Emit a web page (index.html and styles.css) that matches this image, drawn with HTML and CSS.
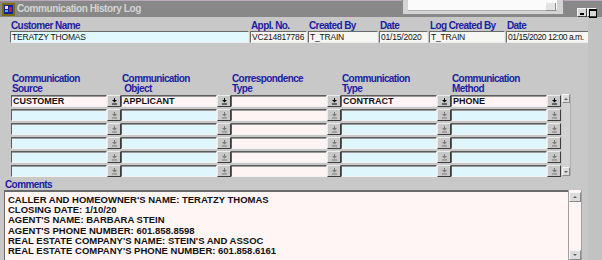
FILE: index.html
```html
<!DOCTYPE html>
<html lang="en">

<head>
  <meta charset="UTF-8">
  <meta name="viewport" content="width=device-width, initial-scale=1.0">
  <title>Communication History Log</title>
  <link rel="stylesheet" href="styles.css">
</head>

<body>
  <div class="window">
    <div class="titlebar">
      <svg class="app-icon" width="13" height="13" viewBox="0 0 13 13">
        <rect x="0" y="0" width="13" height="13" fill="#7a6a10" />
        <rect x="2" y="2" width="9" height="9" fill="#1020a0" />
        <rect x="3" y="3" width="3" height="3" fill="#e8e8e8" />
        <rect x="7" y="4" width="3" height="5" fill="#c02020" />
        <rect x="3" y="7" width="3" height="2" fill="#40c0e0" />
      </svg>
      <span class="title">Communication History Log</span>
      <div class="popup">
        <div class="popup-field"></div>
        <span class="popup-btn"></span>
      </div>
      <div class="win-buttons">
        <span class="win-btn min"></span>
        <span class="win-btn max"></span>
      </div>
    </div>

    <div class="main">
      <div class="content">
        <div class="head-grid">
          <span class="lbl">Customer Name</span>
          <span class="lbl">Appl. No.</span>
          <span class="lbl">Created By</span>
          <span class="lbl">Date</span>
          <span class="lbl">Log Created By</span>
          <span class="lbl">Date</span>
          <div class="field cyan">TERATZY THOMAS</div>
          <div class="field">VC214817786</div>
          <div class="field">T_TRAIN</div>
          <div class="field">01/15/2020</div>
          <div class="field">T_TRAIN</div>
          <div class="field tight">01/15/2020 12:00 a.m.</div>
        </div>

        <div class="lookup">
          <div class="lookup-table">
            <div class="lookup-head">
              <span class="lbl">Communication<br>Source</span>
              <span class="lbl">Communication<br>&nbsp;Object</span>
              <span class="lbl">Correspondence<br>Type</span>
              <span class="lbl">Communication<br>Type</span>
              <span class="lbl">Communication<br>Method</span>
            </div>
            <div class="lookup-rows" id="rows"></div>
          </div>
          <div class="vscroll">
            <span class="sb-btn up"></span>
            <span class="sb-track"></span>
            <span class="sb-btn down"></span>
          </div>
        </div>

        <span class="lbl comments-label">Comments</span>
        <div class="comments">
          <div class="comments-text">
            CALLER AND HOMEOWNER'S NAME: TERATZY THOMAS<br>
            CLOSING DATE: 1/10/20<br>
            AGENT'S NAME: BARBARA STEIN<br>
            AGENT'S PHONE NUMBER: 601.858.8598<br>
            REAL ESTATE COMPANY'S NAME: STEIN'S AND ASSOC<br>
            REAL ESTATE COMPANY'S PHONE NUMBER: 601.858.6161
          </div>
          <div class="cscroll">
            <span class="sb-btn up"></span>
            <span class="sb-track"></span>
            <span class="sb-btn down"></span>
          </div>
        </div>
      </div>
      <div class="edge"></div>
    </div>
  </div>

  <script>
    document.addEventListener('DOMContentLoaded', () => {
      const rows = document.getElementById('rows');
      const first = ['CUSTOMER', 'APPLICANT', '', 'CONTRACT', 'PHONE'];
      const arrow = '<svg width="7" height="7" viewBox="0 0 7 7"><rect x="3" y="0" width="1" height="2"/><path d="M1 2h5L3.5 4.5z"/><rect x="1" y="5.5" width="5" height="1"/></svg>';

      for (let r = 0; r < 6; r++) {
        const row = document.createElement('div');
        row.className = 'lookup-row';
        for (let c = 0; c < 5; c++) {
          const cell = document.createElement('div');
          cell.className = 'cell';
          const pink = r === 0 || c === 2;
          const text = r === 0 ? first[c] : '';
          cell.innerHTML = `<div class="cell-field ${pink ? 'pink' : 'cyan'}">${text}</div>` +
            `<span class="drop-btn ${r === 0 ? 'active' : ''}">${arrow}</span>`;
          row.appendChild(cell);
        }
        rows.appendChild(row);
      }
    });
  </script>
</body>

</html>
```

FILE: styles.css
```css
* {
  margin: 0;
  padding: 0;
  box-sizing: border-box;
}

body {
  background: #c8c8c8;
  font-family: 'Liberation Sans', Arial, sans-serif;
}

.window {
  width: 602px;
  height: 260px;
  overflow: hidden;
  display: flex;
  flex-direction: column;
  background: #c8c8c8;
}

/* title bar */

.titlebar {
  position: relative;
  height: 17px;
  flex-shrink: 0;
  display: flex;
  align-items: flex-start;
  padding-left: 2px;
  background: #888888;
  border-top: 1px solid #bcaabc;
}

.app-icon {
  margin-top: 2px;
}

.title {
  margin-left: 2px;
  line-height: 16px;
  font-size: 10px;
  font-weight: bold;
  letter-spacing: -0.4px;
  color: #d4d4d4;
}

.popup {
  position: absolute;
  left: 402px;
  top: -1px;
  width: 162px;
  height: 15px;
  background: #d4d4d4;
  border-left: 1px solid #8a8a8a;
  border-right: 1px solid #8a8a8a;
  border-bottom: 1px solid #8a8a8a;
  padding: 0 6px 3px 5px;
  display: flex;
}

.popup-field {
  flex: 1;
  background: #fbfbfb;
  border-bottom: 1px solid #b0b0b0;
}

.popup-btn {
  position: absolute;
  right: 7px;
  top: 3px;
  width: 10px;
  height: 8px;
  background: #e4e4e4;
  border-right: 1px solid #909090;
  border-bottom: 1px solid #909090;
}

.win-buttons {
  margin-left: auto;
  margin-right: 5px;
  margin-top: 7px;
  display: flex;
}

.win-btn {
  position: relative;
  width: 10px;
  height: 9px;
  background: #d8d8d8;
  border: 1px solid;
  border-color: #f4f4f4 #404040 #404040 #f4f4f4;
}

.win-btn.min::after {
  content: '';
  position: absolute;
  left: 2px;
  bottom: 1px;
  width: 4px;
  height: 2px;
  background: #000;
}

.win-btn.max::after {
  content: '';
  position: absolute;
  left: 1px;
  top: 0;
  width: 6px;
  height: 6px;
  border: 1px solid #000;
  border-top-width: 2px;
}

/* body */

.main {
  flex: 1;
  display: flex;
  min-height: 0;
}

.content {
  width: 588px;
  display: flex;
  flex-direction: column;
  padding-top: 4px;
}

.edge {
  flex: 1;
  background: #c2c2c2;
}

.lbl {
  display: block;
  font-size: 10px;
  line-height: 10px;
  font-weight: bold;
  letter-spacing: -0.6px;
  color: #1c1ca4;
  white-space: nowrap;
}

.head-grid {
  margin-left: 10px;
  display: grid;
  grid-template-columns: 239px 57px 70px 49px 76px 91px;
  column-gap: 1px;
}

.head-grid .lbl {
  padding-left: 1px;
}

.field {
  height: 12px;
  padding-left: 1px;
  font-size: 8.5px;
  line-height: 10px;
  letter-spacing: -0.2px;
  color: #111;
  white-space: nowrap;
  overflow: hidden;
  background: #f6f6f3;
  border: 1px solid;
  border-color: #6a6a6a #eeeeee #eeeeee #6a6a6a;
}

.field.cyan {
  background: #e2f8ff;
}

.field.tight {
  letter-spacing: -0.45px;
}

/* lookup grid */

.lookup {
  margin-top: 31px;
  margin-left: 11px;
  display: flex;
  align-items: flex-start;
}

.lookup-head {
  display: grid;
  grid-template-columns: repeat(5, 110px);
  margin-bottom: 1px;
}

.lookup-head .lbl {
  padding-left: 1px;
}

.lookup-rows {
  display: flex;
  flex-direction: column;
  gap: 2px;
}

.lookup-row {
  display: grid;
  grid-template-columns: repeat(5, 110px);
}

.cell {
  display: flex;
  height: 12px;
}

.cell-field {
  width: 96px;
  padding-left: 1px;
  font-size: 9px;
  line-height: 10px;
  font-weight: bold;
  color: #111;
  border: 1px solid;
  border-color: #5c5c5c #f2f2f2 #f2f2f2 #5c5c5c;
  box-shadow: inset 0 1px 0 #9a9a9a;
}

.cell-field.pink {
  background: #fff4f4;
}

.cell-field.cyan {
  background: #dff7fc;
}

.drop-btn {
  width: 14px;
  display: flex;
  align-items: center;
  justify-content: center;
  background: #c8c8c8;
  border: 1px solid;
  border-color: #ececec #3c3c3c #3c3c3c #ececec;
  fill: #7a7a7a;
}

.drop-btn.active {
  fill: #000;
}

.vscroll {
  margin-top: 20px;
  margin-left: 1px;
  width: 9px;
  height: 82px;
  display: flex;
  flex-direction: column;
  background: #d2d2d2;
  border-right: 1px solid #b0b0b0;
}

.sb-btn {
  position: relative;
  height: 9px;
  flex-shrink: 0;
  background: #dcdcdc;
  border: 1px solid;
  border-color: #f6f6f6 #8a8a8a #8a8a8a #f6f6f6;
}

.sb-btn::after {
  content: '';
  position: absolute;
  left: 50%;
  top: 50%;
  margin-left: -2px;
  margin-top: -1px;
  border-left: 2px solid transparent;
  border-right: 2px solid transparent;
}

.sb-btn.up::after {
  border-bottom: 2px solid #606060;
}

.sb-btn.down::after {
  border-top: 2px solid #606060;
}

.sb-track {
  flex: 1;
}

/* comments */

.comments-label {
  margin-top: 3px;
  margin-left: 5px;
}

.comments {
  margin-left: 4px;
  width: 578px;
  height: 72px;
  display: flex;
}

.comments-text {
  flex: 1;
  padding: 3px 0 0 3px;
  font-size: 9.5px;
  line-height: 10.2px;
  font-weight: bold;
  color: #111;
  background: #fff5f5;
  border-top: 2px solid #6a6a6a;
  border-left: 1px solid #6a6a6a;
  white-space: nowrap;
}

.cscroll {
  width: 14px;
  display: flex;
  flex-direction: column;
  padding-top: 2px;
  background: #fff5f5;
  border-left: 1px solid #a0a0a0;
  border-right: 1px solid #a0a0a0;
}

.cscroll .sb-btn {
  height: 10px;
}
```
